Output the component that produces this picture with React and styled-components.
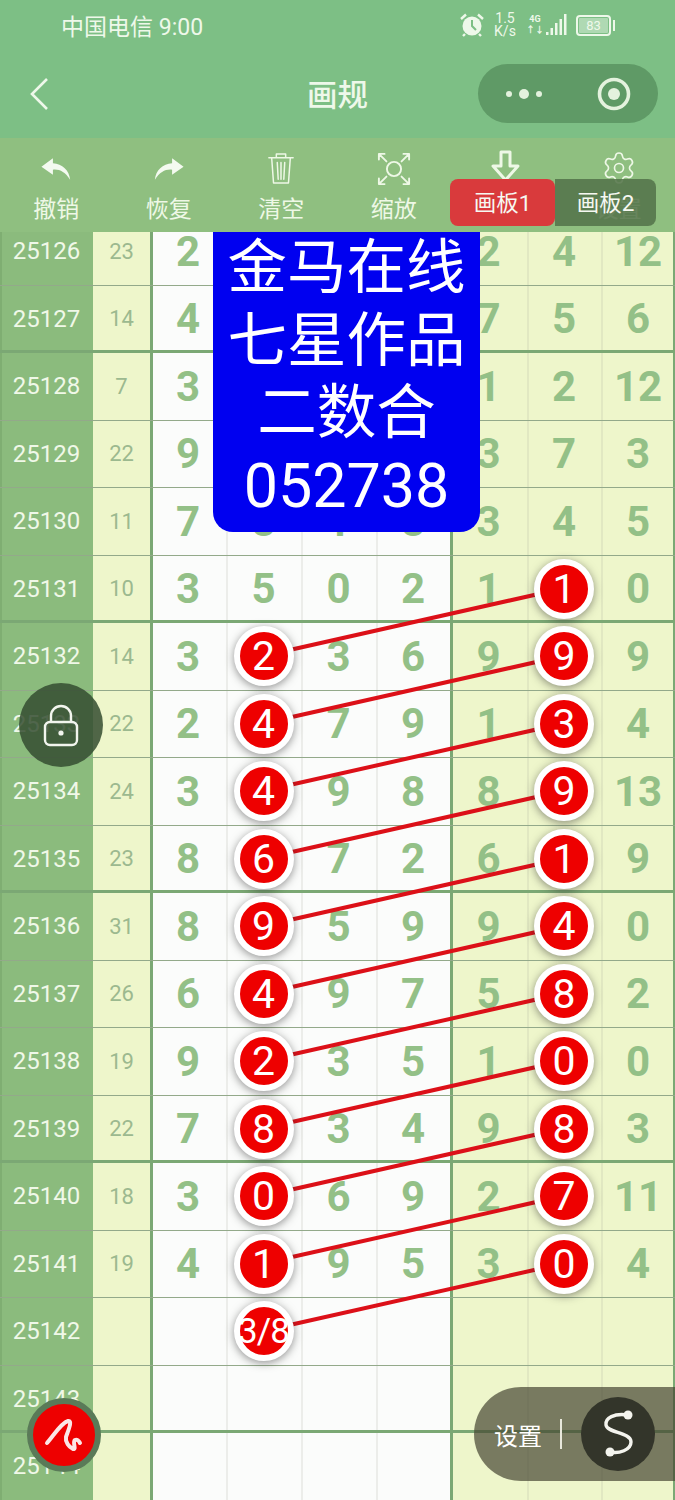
import React from "react";
import styled, { createGlobalStyle } from "styled-components";
import { Settings } from "lucide-react";

const Global = createGlobalStyle`
  html, body { margin: 0; padding: 0; background: #7dbf85; }
  * { box-sizing: border-box; }
`;

const ROW_H = 67.5;
const rows = [
  ["25126", "23", ["2", "", "", "", "2", "4", "12"]],
  ["25127", "14", ["4", "", "", "", "7", "5", "6"]],
  ["25128", "7", ["3", "", "", "", "1", "2", "12"]],
  ["25129", "22", ["9", "", "", "", "3", "7", "3"]],
  ["25130", "11", ["7", "8", "1", "8", "3", "4", "5"]],
  ["25131", "10", ["3", "5", "0", "2", "1", "*1", "0"]],
  ["25132", "14", ["3", "*2", "3", "6", "9", "*9", "9"]],
  ["25133", "22", ["2", "*4", "7", "9", "1", "*3", "4"]],
  ["25134", "24", ["3", "*4", "9", "8", "8", "*9", "13"]],
  ["25135", "23", ["8", "*6", "7", "2", "6", "*1", "9"]],
  ["25136", "31", ["8", "*9", "5", "9", "9", "*4", "0"]],
  ["25137", "26", ["6", "*4", "9", "7", "5", "*8", "2"]],
  ["25138", "19", ["9", "*2", "3", "5", "1", "*0", "0"]],
  ["25139", "22", ["7", "*8", "3", "4", "9", "*8", "3"]],
  ["25140", "18", ["3", "*0", "6", "9", "2", "*7", "11"]],
  ["25141", "19", ["4", "*1", "9", "5", "3", "*0", "4"]],
  ["25142", "", ["", "*3/8", "", "", "", "", ""]],
  ["25143", "", ["", "", "", "", "", "", ""]],
  ["25144", "", ["", "", "", "", "", "", ""]],
];

const Page = styled.div`
  width: 675px;
  height: 1500px;
  overflow: hidden;
  display: flex;
  flex-direction: column;
  position: relative;
  font-family: Roboto, "Noto Sans CJK SC", sans-serif;
`;
const Header = styled.header`
  background: #7dbf85;
  color: #eef8ea;
`;
const StatusBar = styled.div`
  height: 50px;
  display: flex;
  align-items: center;
  padding: 0 60px 0 61px;
  font-size: 23px;
`;
const StatusRight = styled.div`
  margin-left: auto;
  display: flex;
  align-items: center;
  gap: 8px;
`;
const Speed = styled.div`
  font-size: 14px;
  line-height: 13px;
  text-align: center;
  width: 26px;
`;
const Signal = styled.div`
  display: flex;
  align-items: center;
  gap: 2px;
`;
const NetLabel = styled.div`
  font-size: 9px;
  font-weight: 700;
  line-height: 11px;
  text-align: center;
`;
const Battery = styled.div`
  display: flex;
  align-items: center;
  gap: 2px;
`;
const BatteryBody = styled.div`
  width: 35px;
  height: 21px;
  border: 2px solid #eef8ea;
  border-radius: 4px;
  padding: 1px;
`;
const BatteryFill = styled.div`
  height: 100%;
  background: rgba(238, 248, 234, 0.45);
  border-radius: 1px;
  font-size: 13px;
  line-height: 15px;
  text-align: center;
`;
const BatteryTip = styled.div`
  width: 2px;
  height: 11px;
  background: #eef8ea;
`;
const NavBar = styled.div`
  height: 88px;
  position: relative;
  display: flex;
  align-items: center;
  justify-content: center;
`;
const Back = styled.div`
  position: absolute;
  left: 29px;
  top: 27px;
  display: flex;
`;
const Title = styled.div`
  font-size: 30.5px;
  font-weight: 500;
  margin-bottom: 2px;
`;
const Capsule = styled.div`
  position: absolute;
  right: 17px;
  top: 14px;
  width: 180px;
  height: 59px;
  border-radius: 30px;
  background: #5f9a66;
  display: flex;
  align-items: center;
  justify-content: space-between;
  padding: 0 27px 0 27px;
`;
const Toolbar = styled.div`
  height: 94px;
  background: #8fbf80;
  display: grid;
  grid-template-columns: repeat(6, 1fr);
  position: relative;
  color: #eef8e6;
`;
const Tool = styled.div`
  display: flex;
  flex-direction: column;
  align-items: center;
  font-size: 23px;
`;
const ToolIcon = styled.div`
  height: 57px;
  padding-top: ${(p) => p.$top}px;
  display: flex;
  align-items: flex-start;
  justify-content: center;
`;
const ToolLabel = styled.div`
  line-height: 30px;
`;
const Tabs = styled.div`
  position: absolute;
  left: 450px;
  top: 41px;
  width: 206px;
  height: 47px;
  border-radius: 8px;
  overflow: hidden;
  display: flex;
  font-size: 22.5px;
`;
const TabItem = styled.div`
  width: ${(p) => (p.$active ? "105px" : "101px")};
  background: ${(p) => (p.$active ? "#d93a3c" : "rgba(84, 116, 74, 0.88)")};
  color: #f6f8f2;
  display: flex;
  align-items: center;
  justify-content: center;
  border-radius: ${(p) => (p.$active ? "0 8px 8px 0" : "0")};
  padding-bottom: 3px;
`;
const TableFrame = styled.div`
  flex: 1;
  overflow: hidden;
  position: relative;
  background: #fbfcfb;
`;
const TableInner = styled.div`
  margin-top: -14px;
  position: relative;
`;
const Row = styled.div`
  display: grid;
  grid-template-columns: 93px 57px 76px 75px 75px 74px 77px 74px 74px;
  height: ${ROW_H}px;
`;
const Cell = styled.div`
  display: flex;
  align-items: center;
  justify-content: center;
  border-bottom: ${(p) => (p.$thick ? "3px solid #7ba874" : "1.5px solid #93a98a")};
  padding-top: ${(p) => (p.$thick ? "1.5px" : "0")};
`;
const Issue = styled(Cell)`
  background: #8bbb7d;
  color: #f0f8e8;
  font-size: 24px;
  box-shadow: inset 2px 0 0 #7fae72;
`;
const Sum = styled(Cell)`
  background: #eef6cb;
  color: #9cb98f;
  font-size: 22px;
`;
const Num = styled(Cell)`
  background: ${(p) => (p.$light ? "#eef6cb" : "#fbfcfb")};
  color: #93c087;
  font-size: 42px;
  font-weight: 700;
  box-shadow: ${(p) => (p.$first ? "inset 3px 0 0 #7ba874" : "inset 2px 0 0 rgba(160,160,150,0.16)")}
    ${(p) => (p.$last ? ", inset -2px 0 0 #7ba874" : "")};
`;
const Ball = styled.div`
  position: relative;
  z-index: 2;
  flex: none;
  width: 60px;
  height: 60px;
  border-radius: 50%;
  border: 6px solid #fff;
  background: #ee0000;
  box-shadow: 0 2px 8px rgba(40, 40, 40, 0.5);
  color: #fff;
  font-weight: 400;
  font-size: ${(p) => (p.$small ? "35px" : "41px")};
  letter-spacing: ${(p) => (p.$small ? "-1px" : "0")};
  white-space: nowrap;
  display: flex;
  align-items: center;
  justify-content: center;
`;
const Links = styled.svg`
  position: absolute;
  left: 0;
  top: 0;
  z-index: 1;
`;
const Notice = styled.div`
  position: absolute;
  left: 213px;
  top: 0;
  width: 267px;
  height: 300px;
  z-index: 3;
  background: #0000f0;
  border-radius: 0 0 20px 20px;
  color: #fff;
  font-size: 59.5px;
  line-height: 72.5px;
  text-align: center;
`;
const NoticeCode = styled.span`
  font-size: 61px;
`;
const Lock = styled.div`
  position: absolute;
  left: 19px;
  top: 683px;
  width: 84px;
  height: 84px;
  border-radius: 50%;
  background: rgba(52, 76, 48, 0.85);
  display: flex;
  align-items: center;
  justify-content: center;
  z-index: 4;
`;
const Pen = styled.div`
  position: absolute;
  left: 27px;
  top: 1398px;
  width: 74px;
  height: 74px;
  border-radius: 50%;
  background: #ee0000;
  border: 6px solid #5a7a58;
  display: flex;
  align-items: center;
  justify-content: center;
  z-index: 4;
`;
const SettingsPill = styled.div`
  position: absolute;
  left: 474px;
  top: 1387px;
  width: 201px;
  height: 94px;
  border-radius: 47px 0 0 47px;
  background: rgba(70, 70, 50, 0.7);
  display: flex;
  align-items: center;
  padding-left: 20px;
  color: #fff;
  font-size: 24px;
  z-index: 4;
`;
const PillDivider = styled.div`
  width: 1.5px;
  height: 30px;
  background: #e8e8dc;
  margin: 0 19px 0 18px;
`;
const SCircle = styled.div`
  width: 74px;
  height: 74px;
  border-radius: 50%;
  background: #33352a;
  display: flex;
  align-items: center;
  justify-content: center;
`;

const stroke = { fill: "none", stroke: "#eef8e6", strokeLinecap: "round", strokeLinejoin: "round" };

const UndoIcon = () => (
  <svg width="33" height="26" viewBox="0 0 46 36">
    <path d="M18 3 L2 15 L18 26 L18 19 C27 18 35 22 42 33 C41 20 31 11 18 10 Z" fill="#f4faf0" />
  </svg>
);
const RedoIcon = () => (
  <svg width="33" height="26" viewBox="0 0 46 36">
    <path d="M28 3 L44 15 L28 26 L28 19 C19 18 11 22 4 33 C5 20 15 11 28 10 Z" fill="#f4faf0" />
  </svg>
);
const TrashIcon = () => (
  <svg width="28" height="34" viewBox="0 0 30 36" {...stroke} strokeWidth="1.6">
    <path d="M2 6 H28 M10 6 V2 H20 V6 M5 6 L7 33 H23 L25 6 M11 11 L12 29 M15 11 V29 M19 11 L18 29" />
  </svg>
);
const FocusIcon = () => (
  <svg width="34" height="34" viewBox="0 0 36 36" {...stroke} strokeWidth="2">
    <circle cx="18" cy="18" r="7.5" />
    <path d="M2 2 L10 10 M2 2 H8 M2 2 V8 M34 2 L26 10 M34 2 H28 M34 2 V8 M2 34 L10 26 M2 34 H8 M2 34 V28 M34 34 L26 26 M34 34 H28 M34 34 V28" />
  </svg>
);
const SaveIcon = () => (
  <svg width="36" height="38" viewBox="0 0 36 38" {...stroke} strokeWidth="3">
    <path d="M13 2 H22 V16 H30 L17.5 30 L5 16 H13 Z" />
    <path d="M2 33 V36 M33 33 V36" />
  </svg>
);

const tools = [
  ["撤销", <UndoIcon />, 18],
  ["恢复", <RedoIcon />, 18],
  ["清空", <TrashIcon />, 14],
  ["缩放", <FocusIcon />, 14],
  ["保存", <SaveIcon />, 12],
  ["设置", <Settings size={36} strokeWidth={1.1} color="#eef8e6" />, 12],
];

const links = [];
for (let i = 6; i <= 16; i++) {
  links.push({
    key: i,
    y1: (i + 0.5) * ROW_H - 0.75,
    y2: (i - 0.5) * ROW_H - 0.75,
  });
}

export default function App() {
  return (
    <Page>
      <Global />
      <Header>
        <StatusBar>
          中国电信 9:00
          <StatusRight>
            <svg width="24" height="24" viewBox="0 0 24 24">
              <circle cx="12" cy="13" r="9.5" fill="#eef8ea" />
              <path d="M12 7 V13 L16 17" stroke="#7dbf85" strokeWidth="2" fill="none" />
              <path d="M1 6 L6 1.5 M23 6 L18 1.5 M5 21 L3 23 M19 21 L21 23" stroke="#eef8ea" strokeWidth="2.4" />
            </svg>
            <Speed>
              1.5
              <br />
              K/s
            </Speed>
            <Signal>
              <NetLabel>
                4G
                <br />↑↓
              </NetLabel>
              <svg width="22" height="24" viewBox="0 0 22 24" fill="#eef8ea">
                <rect x="0" y="19" width="2.5" height="3" />
                <rect x="4.5" y="15" width="2.5" height="7" />
                <rect x="9" y="10" width="2.5" height="12" />
                <rect x="13.5" y="6" width="2.5" height="16" />
                <rect x="18" y="1" width="2.5" height="21" />
              </svg>
            </Signal>
            <Battery>
              <BatteryBody>
                <BatteryFill>83</BatteryFill>
              </BatteryBody>
              <BatteryTip />
            </Battery>
          </StatusRight>
        </StatusBar>
        <NavBar>
          <Back>
            <svg width="20" height="34" viewBox="0 0 20 34" fill="none" stroke="#eef8ea" strokeWidth="2.6">
              <path d="M18 2 L3 17 L18 32" />
            </svg>
          </Back>
          <Title>画规</Title>
          <Capsule>
            <svg width="38" height="14" viewBox="0 0 38 14" fill="#e4f2de">
              <circle cx="4" cy="7" r="3" />
              <circle cx="19" cy="7" r="5" />
              <circle cx="34" cy="7" r="3" />
            </svg>
            <svg width="34" height="34" viewBox="0 0 34 34">
              <circle cx="17" cy="17" r="14.5" fill="none" stroke="#e4f2de" strokeWidth="3.6" />
              <circle cx="17" cy="17" r="6" fill="#e4f2de" />
            </svg>
          </Capsule>
        </NavBar>
      </Header>
      <Toolbar>
        {tools.map(([label, icon, top]) => (
          <Tool key={label}>
            <ToolIcon $top={top}>{icon}</ToolIcon>
            <ToolLabel>{label}</ToolLabel>
          </Tool>
        ))}
        <Tabs>
          <TabItem $active>画板1</TabItem>
          <TabItem>画板2</TabItem>
        </Tabs>
      </Toolbar>
      <TableFrame>
        <TableInner>
          {rows.map(([issue, sum, nums], r) => {
            const thick = (r + 3) % 4 === 0;
            return (
              <Row key={issue}>
                <Issue $thick={thick}>{issue}</Issue>
                <Sum $thick={thick}>{sum}</Sum>
                {nums.map((n, c) => (
                  <Num key={c} $thick={thick} $light={c >= 4} $first={c === 0 || c === 4} $last={c === 6}>
                    {n.startsWith("*") ? <Ball $small={n.length > 2}>{n.slice(1)}</Ball> : n}
                  </Num>
                ))}
              </Row>
            );
          })}
          <Links width="675" height={ROW_H * rows.length}>
            {links.map((l) => (
              <line key={l.key} x1="263" y1={l.y1} x2="563" y2={l.y2} stroke="#dc1018" strokeWidth="4" />
            ))}
          </Links>
        </TableInner>
        <Notice>
          金马在线
          <br />
          七星作品
          <br />
          二数合
          <br />
          <NoticeCode>052738</NoticeCode>
        </Notice>
      </TableFrame>
      <Lock>
        <svg width="36" height="44" viewBox="0 0 36 44" fill="none" stroke="#f2f5ee" strokeWidth="2.4">
          <rect x="2" y="19" width="32" height="23" rx="5" />
          <path d="M8 19 V13 a10 10 0 0 1 20 0 V19" />
          <circle cx="18" cy="30" r="2.6" fill="#f2f5ee" stroke="none" />
        </svg>
      </Lock>
      <Pen>
        <svg width="40" height="36" viewBox="0 0 40 36" fill="none" stroke="#fbe6e6" strokeWidth="4" strokeLinecap="round" strokeLinejoin="round">
          <path d="M3 26 C10 18 17 6 24 4 C29 3 24 14 22 20 C21 25 25 30 29 32 C33 33 28 25 31 23 C33 22 35 24 36 26" />
        </svg>
      </Pen>
      <SettingsPill>
        设置
        <PillDivider />
        <SCircle>
          <svg width="34" height="48" viewBox="0 0 34 48" fill="none" stroke="#f4f4ee" strokeWidth="3.4" strokeLinecap="round">
            <path d="M27 5 C13 3 4 8 5 15 C6 23 30 22 30 32 C30 40 18 44 9 42" />
            <circle cx="27" cy="5" r="4.5" fill="#f4f4ee" stroke="none" />
            <circle cx="9" cy="42" r="4.5" fill="#f4f4ee" stroke="none" />
          </svg>
        </SCircle>
      </SettingsPill>
    </Page>
  );
}
